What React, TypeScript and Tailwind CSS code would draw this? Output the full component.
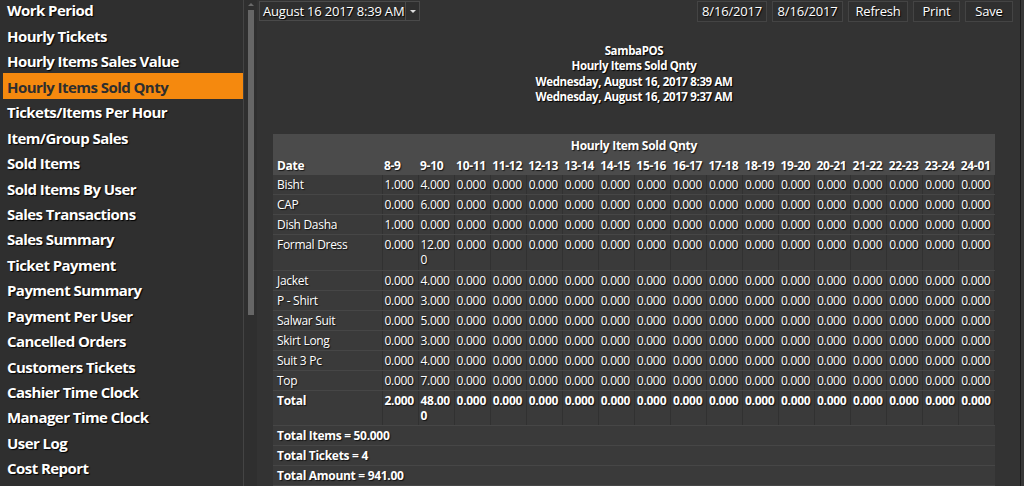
import React from "react";

const sideItems = [
  "Work Period",
  "Hourly Tickets",
  "Hourly Items Sales Value",
  "Hourly Items Sold Qnty",
  "Tickets/Items Per Hour",
  "Item/Group Sales",
  "Sold Items",
  "Sold Items By User",
  "Sales Transactions",
  "Sales Summary",
  "Ticket Payment",
  "Payment Summary",
  "Payment Per User",
  "Cancelled Orders",
  "Customers Tickets",
  "Cashier Time Clock",
  "Manager Time Clock",
  "User Log",
  "Cost Report",
];

const hours = [
  "8-9", "9-10", "10-11", "11-12", "12-13", "13-14", "14-15", "15-16", "16-17",
  "17-18", "18-19", "19-20", "20-21", "21-22", "22-23", "23-24", "24-01",
];

type Row = { name: string; a: string; b: string };
const rows: Row[] = [
  { name: "Bisht", a: "1.000", b: "4.000" },
  { name: "CAP", a: "0.000", b: "6.000" },
  { name: "Dish Dasha", a: "1.000", b: "0.000" },
  { name: "Formal Dress", a: "0.000", b: "12.000" },
  { name: "Jacket", a: "0.000", b: "4.000" },
  { name: "P - Shirt", a: "0.000", b: "3.000" },
  { name: "Salwar Suit", a: "0.000", b: "5.000" },
  { name: "Skirt Long", a: "0.000", b: "3.000" },
  { name: "Suit 3 Pc", a: "0.000", b: "4.000" },
  { name: "Top", a: "0.000", b: "7.000" },
];

function Val({ v }: { v: string }) {
  if (v.length > 5) {
    return (
      <>
        {v.slice(0, 5)}
        <br />
        {v.slice(5)}
      </>
    );
  }
  return <>{v}</>;
}

const cell =
  "px-[2px] pt-[2px] align-top border-r border-r-[#313131] border-b border-b-[#464646] leading-[15px] whitespace-nowrap";

export default function App() {
  return (
    <div className="w-[1024px] h-[486px] flex overflow-hidden bg-[#333333] font-['Open_Sans',sans-serif] text-white">
      {/* Sidebar */}
      <div className="w-[243px] shrink-0 bg-[#2f2f2f] flex flex-col -mt-[3px]">
        {sideItems.map((s, i) => (
          <div
            key={s}
            className={
              "h-[25.45px] shrink-0 ml-[3px] pl-[4px] pt-[2px] flex items-center text-[15px] font-bold tracking-[-0.55px] " +
              (i === 3
                ? "bg-[#f5890e] text-[#2e2e2e]"
                : "text-white [text-shadow:1px_1px_1px_#000]")
            }
          >
            {s}
          </div>
        ))}
      </div>
      <div className="w-px shrink-0 bg-[#444444]" />
      {/* Scrollbar */}
      <div className="w-[13px] shrink-0 bg-[#2f2f2f] flex flex-col items-center pt-[3px]">
        <div className="w-0 h-0 border-l-[3px] border-r-[3px] border-b-[3px] border-l-transparent border-r-transparent border-b-[#6a6a6a]" />
        <div className="w-[6px] h-[305px] mt-[4px] bg-[#666666]" />
      </div>
      {/* Main */}
      <div className="flex-1 flex flex-col min-w-0">
        <div className="flex items-start justify-between pl-[2px] pr-[7px] pt-[1px] text-[13px] [text-shadow:1px_1px_1px_#000]">
          <div className="flex h-[20px] w-[161px] border border-[#4a4a4a] bg-[#2f2f2f]">
            <div className="flex-1 pl-[3px] leading-[18px] tracking-[-0.2px]">August 16 2017 8:39 AM</div>
            <div className="w-[14px] border-l border-[#4a4a4a] flex items-center justify-center">
              <div className="w-0 h-0 border-l-[3px] border-r-[3px] border-t-[3px] border-l-transparent border-r-transparent border-t-[#dddddd]" />
            </div>
          </div>
          <div className="flex gap-[5px]">
            {[
              ["8/16/2017", "w-[70px]"],
              ["8/16/2017", "w-[71px]"],
              ["Refresh", "w-[60px]"],
              ["Print", "w-[47px]"],
              ["Save", "w-[48px]"],
            ].map(([t, w], i) => (
              <div
                key={i}
                className={
                  w +
                  " h-[21px] border border-[#444444] bg-[#2f2f2f] flex items-center justify-center tracking-[-0.2px]"
                }
              >
                {t}
              </div>
            ))}
          </div>
        </div>
        {/* Report */}
        <div className="pl-[16px] pt-[21px]">
          <div className="w-[722px]">
            <div className="flex flex-col items-center text-[11.5px] font-bold leading-[15.3px] tracking-[-0.35px] [text-shadow:1px_1px_1px_#000]">
              <div>SambaPOS</div>
              <div>Hourly Items Sold Qnty</div>
              <div>Wednesday, August 16, 2017 8:39 AM</div>
              <div>Wednesday, August 16, 2017 9:37 AM</div>
            </div>
            <table className="mt-[30px] w-[722px] table-fixed border-collapse text-[12px] tracking-[-0.3px] [text-shadow:1px_1px_1px_rgba(0,0,0,0.7)]">
              <colgroup>
                <col className="w-[109px]" />
                {hours.map((h) => (
                  <col key={h} className="w-[36.06px]" />
                ))}
              </colgroup>
              <tbody>
                <tr className="bg-[#4b4b4b]">
                  <td colSpan={18} className="h-[22px] text-center font-bold leading-[15px] pt-[1px]">
                    Hourly Item Sold Qnty
                  </td>
                </tr>
                <tr className="bg-[#4b4b4b] font-bold">
                  <td className="px-[4px] pt-[2px] pb-[2px] leading-[15px]">Date</td>
                  {hours.map((h) => (
                    <td key={h} className="px-[2px] pt-[2px] pb-[2px] leading-[15px] whitespace-nowrap">
                      {h}
                    </td>
                  ))}
                </tr>
                {rows.map((r) => (
                  <tr key={r.name} className="bg-[#3a3a3a]">
                    <td className={cell + " pb-[2px] pl-[4px]"}>{r.name}</td>
                    <td className={cell + " pb-[2px]"}>{r.a}</td>
                    <td className={cell + (r.b.length > 5 ? " pb-[3px]" : " pb-[2px]")}>
                      <Val v={r.b} />
                    </td>
                    {hours.slice(2).map((h) => (
                      <td key={h} className={cell + " pb-[2px]"}>
                        0.000
                      </td>
                    ))}
                  </tr>
                ))}
                <tr className="bg-[#3a3a3a] font-bold">
                  <td className={cell + " pb-[2px] pl-[4px]"}>Total</td>
                  <td className={cell + " pb-[2px]"}>2.000</td>
                  <td className={cell + " pb-[2px]"}>
                    <Val v="48.000" />
                  </td>
                  {hours.slice(2).map((h) => (
                    <td key={h} className={cell + " pb-[2px]"}>
                      0.000
                    </td>
                  ))}
                </tr>
                {["Total Items = 50.000", "Total Tickets = 4", "Total Amount = 941.00"].map((t) => (
                  <tr key={t} className="bg-[#3a3a3a] font-bold">
                    <td colSpan={18} className="pl-[4px] pt-[2px] pb-[2px] leading-[15px] border-b border-b-[#464646]">
                      {t}
                    </td>
                  </tr>
                ))}
              </tbody>
            </table>
          </div>
        </div>
      </div>
      {/* Right edge */}
      <div className="w-px shrink-0 bg-[#1c1c1c]" />
      <div className="w-[3px] shrink-0 bg-[#383838]" />
    </div>
  );
}
